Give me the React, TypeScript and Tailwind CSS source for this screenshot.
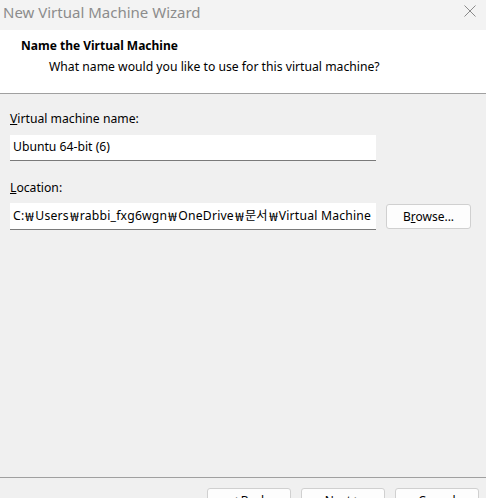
import React from 'react';

const font = { fontFamily: '"Noto Sans", "Noto Sans CJK KR", sans-serif' };
const won = { fontFamily: '"Noto Sans CJK KR", sans-serif' };

const Btn: React.FC<{ children: React.ReactNode; className?: string }> = ({ children, className }) => (
  <button className={`h-[25px] rounded-[3px] border border-[#d0d0d0] bg-[#fdfdfd] text-[12px] text-black ${className ?? ''}`}>
    {children}
  </button>
);

const W = () => <span style={won} className="inline-block scale-x-125 mx-[2px]">₩</span>;

const App: React.FC = () => {
  return (
    <div className="w-[486px] h-[498px] overflow-hidden bg-[#f0f0f0] flex flex-col" style={font}>
      {/* Title bar */}
      <div className="h-[30px] bg-[#f3f3f3] flex items-start justify-between pl-[3px] pr-[10px] pt-[3px] shrink-0">
        <span className="text-[15px] text-[#8c8c8c] leading-[18px]">New Virtual Machine Wizard</span>
        <svg width="14" height="14" viewBox="0 0 14 14" className="mt-[1px] -mr-[1px]">
          <path d="M1.5 1.5 L12.5 12.5 M12.5 1.5 L1.5 12.5" stroke="#8a8a8a" strokeWidth="1" />
        </svg>
      </div>

      {/* Header */}
      <div className="h-[64px] bg-white border-b border-[#a0a0a0] shrink-0 pt-[8px] pl-[21px]">
        <div className="text-[12px] font-bold text-black leading-[16px]">Name the Virtual Machine</div>
        <div className="text-[12.2px] text-[#000] leading-[16px] mt-[5px] pl-[28px]">
          What name would you like to use for this virtual machine?
        </div>
      </div>

      {/* Body */}
      <div className="flex-1 px-[10px] pt-[17px]">
        <div className="text-[12.2px] text-black leading-[16px]">
          <span className="underline">V</span>irtual machine name:
        </div>
        <div className="mt-[8px] w-[366px] h-[26px] bg-white border-b border-[#7a7a7a] flex items-center pl-[3px] text-[12.2px] text-black">
          Ubuntu 64-bit (6)
        </div>
        <div className="mt-[19px] text-[12.2px] text-black leading-[16px]">
          <span className="underline">L</span>ocation:
        </div>
        <div className="mt-[7px] flex items-center gap-[10px]">
          <div className="w-[366px] h-[27px] bg-white border-b border-[#7a7a7a] flex items-center pl-[3px] text-[12.2px] text-black whitespace-nowrap overflow-hidden tracking-[0.2px]">
            C:<W />Users<W />rabbi_fxg6wgn<W />OneDrive<W />문서<W />Virtual Machine
          </div>
          <Btn className="w-[85px]">
            B<span className="underline">r</span>owse...
          </Btn>
        </div>
      </div>

      {/* Footer */}
      <div className="h-[21px] border-t border-[#a0a0a0] shrink-0 flex justify-end gap-[10px] pr-[7px] pt-[10px]">
        <Btn className="w-[84px] shrink-0">&lt; <span className="underline">B</span>ack</Btn>
        <Btn className="w-[84px] shrink-0"><span className="underline">N</span>ext &gt;</Btn>
        <Btn className="w-[84px] shrink-0">Cancel</Btn>
      </div>
    </div>
  );
};

export default App;
